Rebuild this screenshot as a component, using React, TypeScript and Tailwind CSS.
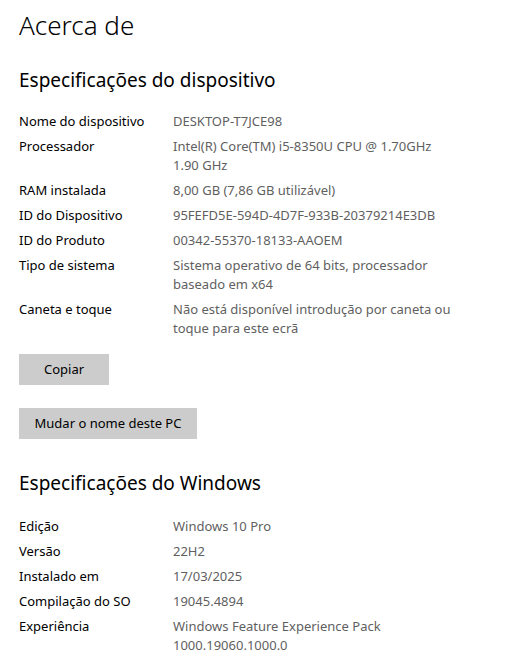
const device: [string, string[]][] = [
  ["Nome do dispositivo", ["DESKTOP-T7JCE98"]],
  ["Processador", ["Intel(R) Core(TM) i5-8350U CPU @ 1.70GHz", "1.90 GHz"]],
  ["RAM instalada", ["8,00 GB (7,86 GB utilizável)"]],
  ["ID do Dispositivo", ["95FEFD5E-594D-4D7F-933B-20379214E3DB"]],
  ["ID do Produto", ["00342-55370-18133-AAOEM"]],
  ["Tipo de sistema", ["Sistema operativo de 64 bits, processador", "baseado em x64"]],
  ["Caneta e toque", ["Não está disponível introdução por caneta ou", "toque para este ecrã"]],
]

const windows: [string, string[]][] = [
  ["Edição", ["Windows 10 Pro"]],
  ["Versão", ["22H2"]],
  ["Instalado em", ["17/03/2025"]],
  ["Compilação do SO", ["19045.4894"]],
  ["Experiência", ["Windows Feature Experience Pack", "1000.19060.1000.0"]],
]

function SpecRows({ rows }: { rows: [string, string[]][] }) {
  return (
    <div className="flex flex-col gap-[6px]">
      {rows.map(([label, lines]) => (
        <div key={label} className="flex text-[13px] leading-[19px]">
          <div className="w-[154px] shrink-0 text-black">{label}</div>
          <div className="text-[#5f5f5f]">
            {lines.map((l) => (
              <div key={l}>{l}</div>
            ))}
          </div>
        </div>
      ))}
    </div>
  )
}

export default function App() {
  return (
    <div
      className="min-h-[658px] w-[506px] bg-white pl-[19px] text-black"
      style={{ fontFamily: '"Noto Sans", "Open Sans", sans-serif' }}
    >
      <h1 className="pt-[6px] text-[26px] leading-[38px] font-light">Acerca de</h1>

      <h2 className="mt-[22px] text-[19px] leading-[28px]">Especificações do dispositivo</h2>
      <div className="mt-[18px]">
        <SpecRows rows={device} />
      </div>

      <div className="mt-[16px] flex flex-col items-start gap-[23px]">
        <button className="h-[31px] w-[90px] bg-[#cccccc] text-[13px]">Copiar</button>
        <button className="h-[31px] w-[178px] bg-[#cccccc] text-[13px]">Mudar o nome deste PC</button>
      </div>

      <h2 className="mt-[30px] text-[19px] leading-[28px]">Especificações do Windows</h2>
      <div className="mt-[20px]">
        <SpecRows rows={windows} />
      </div>
    </div>
  )
}
